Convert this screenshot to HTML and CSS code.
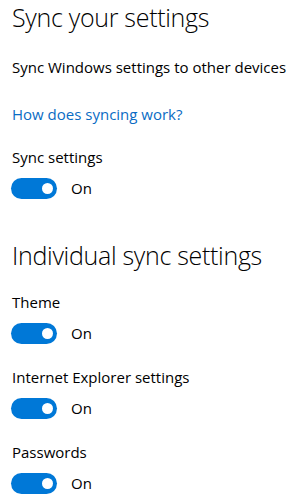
FILE: index.html
```html
<!DOCTYPE html>
<html lang="en">
<head>
<meta charset="utf-8">
<title>Sync your settings</title>
<link rel="stylesheet" href="styles.css">
</head>
<body>
<main class="page">
  <h1 class="title">Sync your settings</h1>
  <p class="desc">Sync Windows settings to other devices</p>
  <a class="link" href="#">How does syncing work?</a>

  <div class="setting first">
    <div class="label">Sync settings</div>
    <div class="toggle-row">
      <span class="toggle"><span class="knob"></span></span>
      <span class="state">On</span>
    </div>
  </div>

  <h2 class="title sub">Individual sync settings</h2>

  <div class="setting">
    <div class="label">Theme</div>
    <div class="toggle-row">
      <span class="toggle"><span class="knob"></span></span>
      <span class="state">On</span>
    </div>
  </div>

  <div class="setting">
    <div class="label">Internet Explorer settings</div>
    <div class="toggle-row">
      <span class="toggle"><span class="knob"></span></span>
      <span class="state">On</span>
    </div>
  </div>

  <div class="setting">
    <div class="label">Passwords</div>
    <div class="toggle-row">
      <span class="toggle"><span class="knob"></span></span>
      <span class="state">On</span>
    </div>
  </div>
</main>
</body>
</html>
```
FILE: styles.css
```css
html, body {
  margin: 0;
  padding: 0;
  background: #ffffff;
}

body {
  font-family: "Open Sans", "Noto Sans", sans-serif;
  color: #000000;
  font-size: 15px;
  line-height: 20px;
}

.page {
  display: flex;
  flex-direction: column;
  align-items: flex-start;
  padding: 0 0 0 12px;
}

.title {
  margin: 0;
  font-size: 25px;
  line-height: 34px;
  font-weight: 300;
  letter-spacing: -0.3px;
  white-space: nowrap;
}

.desc {
  margin: 23px 0 0;
  white-space: nowrap;
}

.link {
  margin-top: 27px;
  color: #0a6cc4;
  text-decoration: none;
}

.setting {
  display: flex;
  flex-direction: column;
  gap: 11px;
  margin-top: 23px;
}

.sub {
  margin-top: 39px;
}

.sub + .setting {
  margin-top: 20px;
}

.label {
  white-space: nowrap;
}

.toggle-row {
  display: flex;
  align-items: center;
  gap: 14px;
  height: 21px;
}

.toggle {
  box-sizing: border-box;
  width: 46px;
  height: 21px;
  margin-left: -1px;
  border-radius: 10.5px;
  background: #0078d7;
  display: flex;
  align-items: center;
  justify-content: flex-end;
  padding-right: 4px;
}

.knob {
  width: 11px;
  height: 11px;
  border-radius: 50%;
  background: #ffffff;
}

.state {
  line-height: 21px;
}
```
